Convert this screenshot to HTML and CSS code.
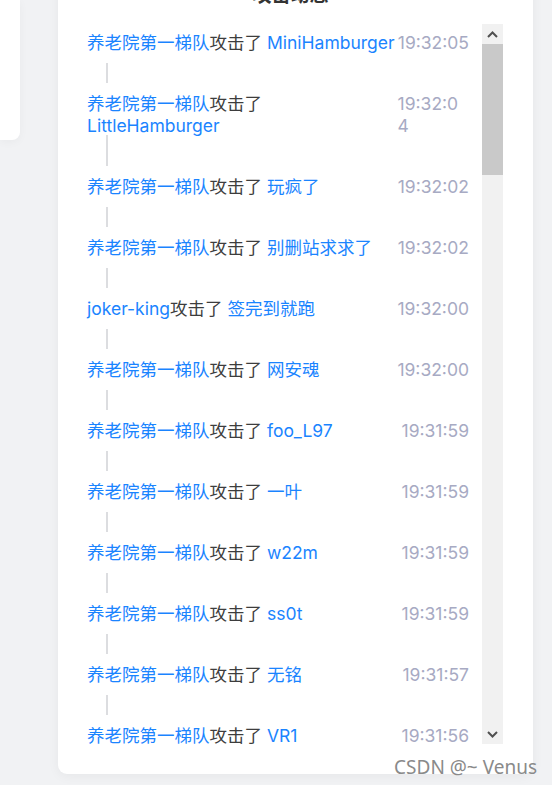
FILE: index.html
```html
<!DOCTYPE html>
<html lang="zh-CN">
<head>
<meta charset="utf-8">
<title>攻击动态</title>
<link rel="stylesheet" href="styles.css">
</head>
<body>
<div class="page">
  <div class="side-card"></div>
  <section class="card">
    <h2 class="card-title">攻击动态</h2>
    <div class="feed">
      <ul class="feed-list">
        <li class="item"><div class="row"><span class="text"><span class="who">养老院第一梯队</span>攻击了 <span class="who">MiniHamburger</span></span><span class="time">19:32:05</span></div></li>
        <li class="item"><div class="row"><span class="text"><span class="who">养老院第一梯队</span>攻击了 <span class="who">LittleHamburger</span></span><span class="time">19:32:04</span></div></li>
        <li class="item"><div class="row"><span class="text"><span class="who">养老院第一梯队</span>攻击了 <span class="who">玩疯了</span></span><span class="time">19:32:02</span></div></li>
        <li class="item"><div class="row"><span class="text"><span class="who">养老院第一梯队</span>攻击了 <span class="who">别删站求求了</span></span><span class="time">19:32:02</span></div></li>
        <li class="item"><div class="row"><span class="text"><span class="who">joker-king</span>攻击了 <span class="who">签完到就跑</span></span><span class="time">19:32:00</span></div></li>
        <li class="item"><div class="row"><span class="text"><span class="who">养老院第一梯队</span>攻击了 <span class="who">网安魂</span></span><span class="time">19:32:00</span></div></li>
        <li class="item"><div class="row"><span class="text"><span class="who">养老院第一梯队</span>攻击了 <span class="who">foo_L97</span></span><span class="time">19:31:59</span></div></li>
        <li class="item"><div class="row"><span class="text"><span class="who">养老院第一梯队</span>攻击了 <span class="who">一叶</span></span><span class="time">19:31:59</span></div></li>
        <li class="item"><div class="row"><span class="text"><span class="who">养老院第一梯队</span>攻击了 <span class="who">w22m</span></span><span class="time">19:31:59</span></div></li>
        <li class="item"><div class="row"><span class="text"><span class="who">养老院第一梯队</span>攻击了 <span class="who">ss0t</span></span><span class="time">19:31:59</span></div></li>
        <li class="item"><div class="row"><span class="text"><span class="who">养老院第一梯队</span>攻击了 <span class="who">无铭</span></span><span class="time">19:31:57</span></div></li>
        <li class="item"><div class="row"><span class="text"><span class="who">养老院第一梯队</span>攻击了 <span class="who">VR1</span></span><span class="time">19:31:56</span></div></li>
        <li class="item"><div class="row"><span class="text"><span class="who">养老院第一梯队</span>攻击了 <span class="who">Sn0w</span></span><span class="time">19:31:55</span></div></li>
      </ul>
      <div class="scrollbar">
        <div class="sb-btn">
          <svg width="11" height="7" viewBox="0 0 11 7"><polyline points="1,6 5.5,1.5 10,6" fill="none" stroke="#505050" stroke-width="2"/></svg>
        </div>
        <div class="sb-thumb"></div>
        <div class="sb-track"></div>
        <div class="sb-btn">
          <svg width="11" height="7" viewBox="0 0 11 7"><polyline points="1,1 5.5,5.5 10,1" fill="none" stroke="#505050" stroke-width="2"/></svg>
        </div>
      </div>
    </div>
  </section>
</div>
<div class="watermark">CSDN @~ Venus</div>
</body>
</html>
```

FILE: styles.css
```css
* { box-sizing: border-box; }

html, body {
  margin: 0;
  padding: 0;
}

body {
  width: 552px;
  height: 785px;
  overflow: hidden;
  background: #f1f2f4;
  font-family: Inter, "Noto Sans CJK SC", sans-serif;
  position: relative;
}

.page {
  display: flex;
  align-items: flex-start;
  gap: 38px;
}

.side-card {
  width: 20px;
  height: 140px;
  background: #fff;
  border-bottom-right-radius: 8px;
  box-shadow: 0 2px 10px rgba(0, 0, 0, 0.04);
}

.card {
  width: 475px;
  margin-top: -21px;
  padding: 0 30px 30px 20px;
  background: #fff;
  border-radius: 0 0 9px 9px;
  box-shadow: 0 2px 12px rgba(0, 0, 0, 0.05);
}

.card-title {
  margin: 0;
  height: 30px;
  line-height: 30px;
  font-size: 19px;
  font-weight: 700;
  color: #333;
  text-align: center;
  font-family: "Noto Sans CJK SC", sans-serif;
}

.feed {
  margin-top: 15px;
  height: 720px;
  display: flex;
}

.feed-list {
  flex: 1;
  list-style: none;
  margin: 0;
  padding: 8px 13px 0 9px;
  overflow: hidden;
}

.item {
  position: relative;
  padding-bottom: 39px;
}

.item::after {
  content: "";
  position: absolute;
  left: 19px;
  top: 50%;
  bottom: 10px;
  width: 2px;
  background: #dcdde0;
}

.row {
  display: flex;
  justify-content: space-between;
  font-size: 17.5px;
  line-height: 22px;
}

.text {
  color: #3d3d3d;
  font-family: Inter, "Noto Sans CJK SC", sans-serif;
}

.who {
  color: #1a84ff;
}

.time {
  color: #a7aac3;
  word-break: break-all;
}

.scrollbar {
  width: 21px;
  display: flex;
  flex-direction: column;
  background: #f1f1f1;
}

.sb-btn {
  height: 20px;
  display: flex;
  align-items: center;
  justify-content: center;
}

.sb-thumb {
  height: 131px;
  background: #c9c9c9;
}

.sb-track {
  flex: 1;
}

.watermark {
  position: absolute;
  right: 15px;
  bottom: 6px;
  font-family: "Noto Sans", sans-serif;
  font-size: 19px;
  line-height: 24px;
  color: #8a8a8a;
  text-shadow: 0 0 1px #fff;
}
```
